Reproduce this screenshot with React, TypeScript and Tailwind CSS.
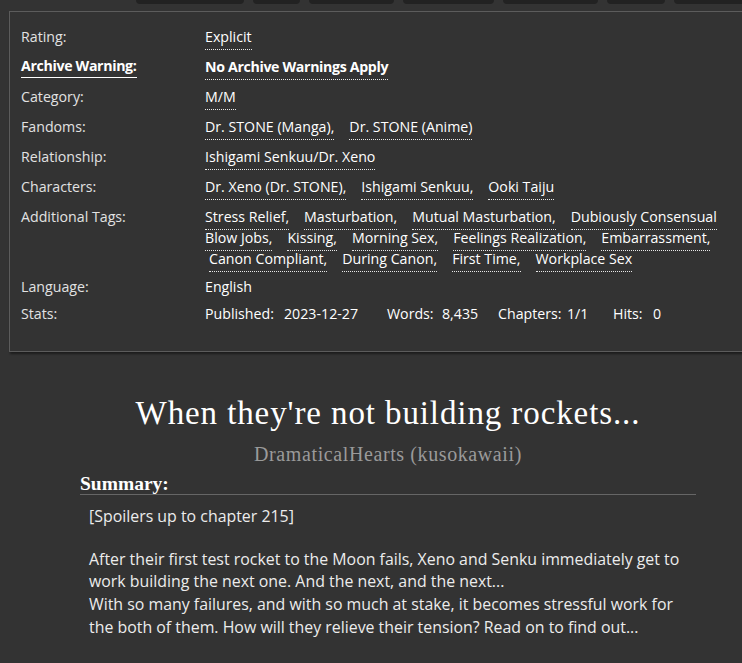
import React from "react";

const Tag = ({ children, bold = false }: { children: React.ReactNode; bold?: boolean }) => (
  <span
    className={`block border-b border-dotted border-[#e8e8e8] pb-[2px] leading-[21px] text-white ${bold ? "font-bold tracking-[-0.35px]" : ""}`}
  >
    {children}
  </span>
);

const Row = ({
  label,
  children,
  className = "",
}: {
  label: React.ReactNode;
  children: React.ReactNode;
  className?: string;
}) => (
  <div className={`flex items-start leading-[21px] ${className}`}>
    <div className="w-[184px] h-[21px] shrink-0 text-[#e2e2e2]">{label}</div>
    <div className="flex-1">{children}</div>
  </div>
);

const TagLine = ({ tags, className = "" }: { tags: string[]; className?: string }) => (
  <div className={`flex gap-[15px] h-[21px] items-start whitespace-nowrap ${className}`}>
    {tags.map((t) => (
      <Tag key={t}>{t}</Tag>
    ))}
  </div>
);

export default function App() {
  const tabs = [108, 47, 85, 91, 95, 58, 90];
  return (
    <div className="w-[742px] h-[663px] overflow-hidden bg-[#333333] font-['Open_Sans',sans-serif] text-[14.2px]">
      <div className="flex h-[4px] pl-[136px] gap-[9px]">
        {tabs.map((w, i) => (
          <div key={i} style={{ width: w }} className="h-[4px] shrink-0 rounded-b-[5px] bg-[#222222]" />
        ))}
      </div>

      <div className="ml-[9px] mt-[7px] w-[780px] h-[341px] border border-[#5c5c5c] bg-[#333333] shadow-[1px_2px_2px_rgba(0,0,0,0.45)] pl-[11px] pt-[14px]">
        <Row label="Rating:" className="mb-[9px]">
          <TagLine tags={["Explicit"]} />
        </Row>
        <Row
          label={
            <span className="float-left border-b border-solid border-white pb-[1px] font-bold tracking-[-0.35px] text-white leading-[20px]">
              Archive Warning:
            </span>
          }
          className="mb-[9px]"
        >
          <div className="flex h-[21px] items-start">
            <Tag bold>No Archive Warnings Apply</Tag>
          </div>
        </Row>
        <Row label="Category:" className="mb-[9px]">
          <TagLine tags={["M/M"]} />
        </Row>
        <Row label="Fandoms:" className="mb-[9px]">
          <TagLine tags={["Dr. STONE (Manga),", "Dr. STONE (Anime)"]} />
        </Row>
        <Row label="Relationship:" className="mb-[9px]">
          <TagLine tags={["Ishigami Senkuu/Dr. Xeno"]} />
        </Row>
        <Row label="Characters:" className="mb-[9px]">
          <TagLine tags={["Dr. Xeno (Dr. STONE),", "Ishigami Senkuu,", "Ooki Taiju"]} />
        </Row>
        <Row label="Additional Tags:" className="mb-[7px]">
          <TagLine tags={["Stress Relief,", "Masturbation,", "Mutual Masturbation,", "Dubiously Consensual"]} />
          <TagLine tags={["Blow Jobs,", "Kissing,", "Morning Sex,", "Feelings Realization,", "Embarrassment,"]} />
          <TagLine className="ml-[4px]" tags={["Canon Compliant,", "During Canon,", "First Time,", "Workplace Sex"]} />
        </Row>
        <Row label="Language:" className="mb-[6px]">
          <div className="text-white">English</div>
        </Row>
        <Row label="Stats:">
          <div className="flex text-white whitespace-nowrap">
            <span className="w-[79px] shrink-0">Published:</span>
            <span className="w-[103px] shrink-0">2023-12-27</span>
            <span className="w-[55px] shrink-0">Words:</span>
            <span className="w-[56px] shrink-0">8,435</span>
            <span className="w-[69px] shrink-0">Chapters:</span>
            <span className="w-[46px] shrink-0">1/1</span>
            <span className="w-[40px] shrink-0">Hits:</span>
            <span>0</span>
          </div>
        </Row>
      </div>

      <div className="ml-[80px] w-[616px]">
        <h2 className="mt-[42px] text-center font-['Liberation_Serif',serif] text-[33px] tracking-[0.9px] leading-[38px] text-white">
          When they're not building rockets...
        </h2>
        <div className="mt-[10px] text-center font-['Liberation_Serif',serif] text-[20px] tracking-[0.6px] leading-[24px] text-[#9a9a9a]">
          DramaticalHearts (kusokawaii)
        </div>
        <div className="mt-[8px] border-b border-[#666666] font-['Liberation_Serif',serif] text-[19.5px] font-bold leading-[20px] text-white">
          Summary:
        </div>
        <div className="ml-[9px] mt-[10px] text-[15.9px] leading-[22.6px] text-[#ececec] whitespace-nowrap">
          <p>[Spoilers up to chapter 215]</p>
          <p className="mt-[20.3px]">
            After their first test rocket to the Moon fails, Xeno and Senku immediately get to
            <br />
            work building the next one. And the next, and the next...
            <br />
            With so many failures, and with so much at stake, it becomes stressful work for
            <br />
            the both of them. How will they relieve their tension? Read on to find out...
          </p>
        </div>
      </div>
    </div>
  );
}
